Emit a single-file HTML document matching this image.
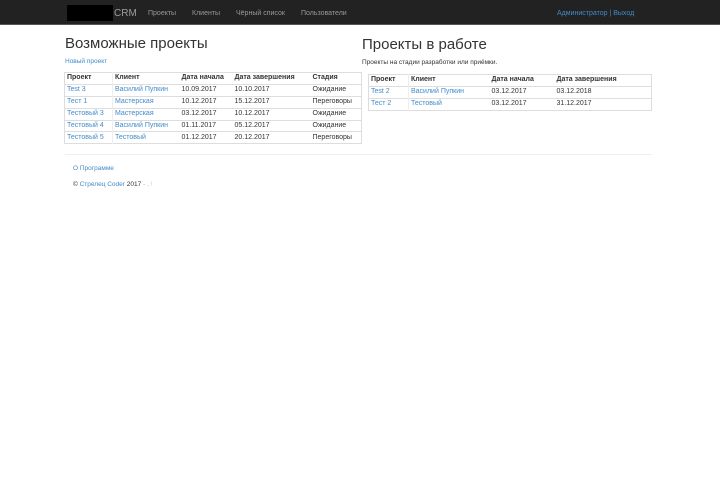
<!DOCTYPE html>
<html><head><meta charset="utf-8"><style>
*{margin:0;padding:0;box-sizing:border-box}
body{width:720px;height:480px;background:#fff;font-family:"Liberation Sans",sans-serif;color:#333;position:relative;overflow:hidden}
.nav{position:absolute;left:0;top:0;width:720px;height:25px;background:#222;border-bottom:1px solid #555}
.nav span{position:absolute;top:10px;font-size:7px;color:#999}
.blk{position:absolute;left:67px;top:5px;width:46px;height:16px;background:#000}
.crm{position:absolute;left:114px;top:8px;font-size:10px;color:#9d9d9d}
a,.a{color:#428bca}
h1{position:absolute;font-weight:normal;font-size:15px;color:#333}
.t{position:absolute;border-collapse:collapse;font-size:7px;border:1px solid #ddd}
.t td,.t th{border-top:1px solid #ddd;height:11.9px;padding:0 2px;text-align:left;white-space:nowrap;vertical-align:middle;line-height:10px}
.t th{font-weight:bold;color:#333}
.t td:first-child,.t th:first-child{border-right:1px solid #eee}
.s{position:absolute;font-size:6.5px}
</style></head><body>
<div class="nav"><div class="blk"></div><div class="crm">CRM</div>
<span style="left:148px">Проекты</span><span style="left:192px">Клиенты</span><span style="left:236px">Чёрный список</span><span style="left:301px">Пользователи</span>
<span style="left:557px;color:#428bca">Администратор | Выход</span></div>
<h1 style="left:65px;top:35px">Возможные проекты</h1>
<div class="s a" style="left:65px;top:58px">Новый проект</div>
<table class="t" style="left:64px;top:72px;width:298px">
<tr><th style="width:48px">Проект</th><th style="width:67px">Клиент</th><th style="width:53px">Дата начала</th><th style="width:78px">Дата завершения</th><th>Стадия</th></tr>
<tr><td class="a">Test 3</td><td class="a">Василий Пупкин</td><td>10.09.2017</td><td>10.10.2017</td><td>Ожидание</td></tr>
<tr><td class="a">Тест 1</td><td class="a">Мастерская</td><td>10.12.2017</td><td>15.12.2017</td><td>Переговоры</td></tr>
<tr><td class="a">Тестовый 3</td><td class="a">Мастерская</td><td>03.12.2017</td><td>10.12.2017</td><td>Ожидание</td></tr>
<tr><td class="a">Тестовый 4</td><td class="a">Василий Пупкин</td><td>01.11.2017</td><td>05.12.2017</td><td>Ожидание</td></tr>
<tr><td class="a">Тестовый 5</td><td class="a">Тестовый</td><td>01.12.2017</td><td>20.12.2017</td><td>Переговоры</td></tr>
</table>
<h1 style="left:362px;top:36px">Проекты в работе</h1>
<div class="s" style="left:362px;top:59px">Проекты на стадии разработки или приёмки.</div>
<table class="t" style="left:368px;top:74px;width:284px">
<tr><th style="width:40px">Проект</th><th style="width:81px">Клиент</th><th style="width:65px">Дата начала</th><th>Дата завершения</th></tr>
<tr><td class="a">Test 2</td><td class="a">Василий Пупкин</td><td>03.12.2017</td><td>03.12.2018</td></tr>
<tr><td class="a">Тест 2</td><td class="a">Тестовый</td><td>03.12.2017</td><td>31.12.2017</td></tr>
</table>
<div style="position:absolute;left:65px;top:154px;width:587px;border-top:1px solid #eee"></div>
<div class="s a" style="left:73px;top:165px">О Программе</div>
<div class="s" style="left:73px;top:181px">© <span class="a">Стрелец Coder</span> 2017 <span style="color:#aaa">- .</span> <span style="color:#fbb">!</span></div>
</body></html>
